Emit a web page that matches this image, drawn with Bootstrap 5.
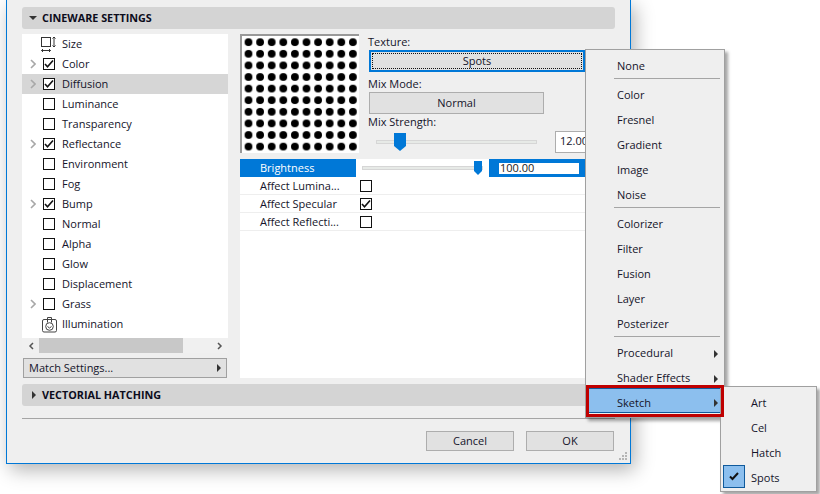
<!DOCTYPE html>
<html lang="en">
<head>
<meta charset="UTF-8">
<title>Cineware Settings</title>
<link href="https://cdn.jsdelivr.net/npm/bootstrap@5.3.3/dist/css/bootstrap.min.css" rel="stylesheet">
<style>
body { background: #fff; margin: 0; width: 820px; height: 494px; overflow: hidden; font-family: "Open Sans", "Noto Sans", sans-serif; font-size: 11px; color: #14142a; position: relative; }
.dlg { width: 625px; height: 464px; margin-left: 6px; background: #efefef; border: 1px solid #0078d7; border-top: 0; padding: 7px 15px 0; box-shadow: 4px 6px 18px rgba(0,0,0,.3); position: relative; }
.sec-head { height: 22px; background: #d4d4d4; border-radius: 3px; font-weight: 700; font-size: 10.8px; padding-left: 6px; gap: 5px; color: #0c0c1c; }
.tri-down { width: 0; height: 0; border: 4px solid transparent; border-top: 4px solid #333; border-bottom: 0; margin-left: 1px; }
.tri-right { width: 0; height: 0; border: 4px solid transparent; border-left: 4px solid #333; border-right: 0; flex: none; }
.body-row { height: 344px; margin-top: 5px; gap: 12px; }
.left-col { width: 206px; }
.tree { height: 304px; background: #fff; }
.tree-row { height: 20px; }
.tree-row.sel { background: #d6d6d6; }
.chev { width: 21px; flex: none; padding-left: 8px; display: flex; }
.cb { width: 12px; height: 12px; border: 1px solid #111; background: #fff; flex: none; display: block; }
.cb svg { display: block; }
.ic { width: 17px; height: 17px; margin: 0 -3px 0 -2px; flex: none; }
.tree-lbl { margin-left: 7px; }
.hscroll { height: 15px; background: #f0f0f0; }
.hthumb { width: 144px; height: 100%; background: #c8c8c8; }
.hbtn { width: 17px; display: flex; justify-content: center; align-items: center; }
.match-btn { height: 20px; margin: 5px 1px 0; background: #e1e1e1; border: 1px solid #a0a0a0; padding: 0 5px 0 5px; }
.right-col { width: 375px; background: #fff; }
.top-part { height: 125px; background: #efefef; }
.preview { width: 119px; height: 119px; border-top: 2px solid #999; border-left: 2px solid #999; background: #fff; display: block; flex: none; }
.ctl { margin-left: 9px; width: 247px; position: relative; }
.lbl { height: 16px; line-height: 16px; }
.lbl-gap { margin-top: 4px; }
.tex-btn { width: 216px; height: 22px; background: #e1e1e1; border: 2px solid #0078d7; outline: 1px dotted #111; outline-offset: -4px; margin-left: 1px; }
.mix-btn { width: 175px; height: 22px; background: #e1e1e1; border: 1px solid #adadad; margin-left: 1px; }
.slide-row { margin-top: 1px; }
.track { height: 4px; background: #e7eae7; border: 1px solid #d6d6d6; position: relative; }
.thumb { position: absolute; width: 12px; height: 18px; top: -8px; background: #0078d7; clip-path: polygon(0 0, 100% 0, 100% 72%, 50% 100%, 0 72%); }
.s1 { width: 161px; margin: 0 0 0 8px; flex: none; }
.s1 .thumb { left: 17px; }
.num-box { width: 34px; height: 22px; background: #fff; border: 1px solid #adadad; margin-left: 18px; padding-left: 4px; line-height: 18px; overflow: hidden; white-space: nowrap; }
.prop-row { height: 18px; border-bottom: 1px solid #eee; }
.prop-row.act { height: 18px; border: 0; }
.prop-name { width: 116px; padding: 1px 0 0 20px; flex: none; white-space: nowrap; }
.act .prop-name { background: #0078d7; color: #fff; height: 100%; display: flex; align-items: center; padding-top: 0; }
.s2 { width: 121px; margin: 0 6px 0 6px; flex: none; }
.s2 .thumb { left: 111px; width: 8px; height: 14px; top: -6px; }
.val-cell { width: 132px; height: 100%; background: #0078d7; padding-left: 10px; flex: none; }
.val-in { width: 80px; height: 11px; background: #fff; line-height: 10px; color: #222; padding-left: 1px; }
.prop-cb { margin-left: 4px; }
.sep { border-top: 1px solid #a5a5a5; margin-top: 12px; height: 0; }
.foot { margin-top: 12px; margin-right: 1px; gap: 12px; }
.foot-btn { width: 88px; height: 20px; background: #e1e1e1; border: 1px solid #adadad; }
.grip { position: absolute; right: 2px; bottom: 2px; }
.ctx { position: absolute; display: block; margin: 0; padding: 3px; min-width: 0; background: #efefef; border: 1px solid #a0a0a0; border-radius: 0; box-shadow: 3px 3px 3px rgba(0,0,0,.35); font-size: 11px; color: #14142a; }
.ctx-main { left: 585px; top: 49px; width: 140px; height: 369px; }
.ctx-sub { left: 720px; top: 386px; width: 97px; height: 106px; }
.ctx .dropdown-item { height: 25px; padding: 2px 0 0 28px; display: flex; align-items: center; justify-content: space-between; color: inherit; background: transparent; position: relative; }
.ctx-sub .dropdown-item { padding-left: 27px; }
.ctx .dropdown-divider { margin: 0 1px 0 25px; border-top: 1px solid #a5a5a5; opacity: 1; height: 4px; }
.tri-sub { margin-right: 3px; }
.ctx .dropdown-item.hi { margin-top: -2px; padding-top: 5px; background: #8cbfee; border-top: 1px solid #0f5a9c; border-bottom: 1px solid #0f5a9c; }
.red-box { position: absolute; z-index: 1001; left: 586px; top: 385px; width: 138px; height: 32px; border: 3px solid #bf0000; pointer-events: none; }
.chk-box { position: absolute; left: -1px; top: 0; width: 22px; height: 23px; background: #8cbfee; border: 1px solid #0f5a9c; display: flex; align-items: center; justify-content: center; }
</style>
</head>
<body>
<div class="dlg">
  <div class="sec-head d-flex align-items-center"><span class="tri-down"></span><span>CINEWARE SETTINGS</span></div>
  <div class="body-row d-flex">
    <div class="left-col d-flex flex-column">
      <div class="tree">
        <div class="tree-row d-flex align-items-center"><span class="chev"></span><svg class="ic" viewBox="0 0 17 17" fill="none" stroke="#333"><rect x="0.500" y="1.500" width="9" height="9"/><path d="M13 1v10M11.500 2.500L13 1l1.500 1.500M11.500 9.500L13 11l1.500-1.500M0.500 14.500h9M2 13L0.500 14.500 2 16M8 13l1.500 1.500L8 16"/></svg><span class="tree-lbl">Size</span></div>
        <div class="tree-row d-flex align-items-center"><span class="chev"><svg width="6" height="10" viewBox="0 0 6 10" fill="none" stroke="#a8a8a8" stroke-width="1.600"><path d="M1 1l4 4-4 4"/></svg></span><span class="cb"><svg width="10" height="10" viewBox="0 0 10 10" fill="none" stroke="#111" stroke-width="1.600"><path d="M1 5l2.500 2.800L9 1.500"/></svg></span><span class="tree-lbl">Color</span></div>
        <div class="tree-row sel d-flex align-items-center"><span class="chev"><svg width="6" height="10" viewBox="0 0 6 10" fill="none" stroke="#a8a8a8" stroke-width="1.600"><path d="M1 1l4 4-4 4"/></svg></span><span class="cb"><svg width="10" height="10" viewBox="0 0 10 10" fill="none" stroke="#111" stroke-width="1.600"><path d="M1 5l2.500 2.800L9 1.500"/></svg></span><span class="tree-lbl">Diffusion</span></div>
        <div class="tree-row d-flex align-items-center"><span class="chev"></span><span class="cb"></span><span class="tree-lbl">Luminance</span></div>
        <div class="tree-row d-flex align-items-center"><span class="chev"></span><span class="cb"></span><span class="tree-lbl">Transparency</span></div>
        <div class="tree-row d-flex align-items-center"><span class="chev"><svg width="6" height="10" viewBox="0 0 6 10" fill="none" stroke="#a8a8a8" stroke-width="1.600"><path d="M1 1l4 4-4 4"/></svg></span><span class="cb"><svg width="10" height="10" viewBox="0 0 10 10" fill="none" stroke="#111" stroke-width="1.600"><path d="M1 5l2.500 2.800L9 1.500"/></svg></span><span class="tree-lbl">Reflectance</span></div>
        <div class="tree-row d-flex align-items-center"><span class="chev"></span><span class="cb"></span><span class="tree-lbl">Environment</span></div>
        <div class="tree-row d-flex align-items-center"><span class="chev"></span><span class="cb"></span><span class="tree-lbl">Fog</span></div>
        <div class="tree-row d-flex align-items-center"><span class="chev"><svg width="6" height="10" viewBox="0 0 6 10" fill="none" stroke="#a8a8a8" stroke-width="1.600"><path d="M1 1l4 4-4 4"/></svg></span><span class="cb"><svg width="10" height="10" viewBox="0 0 10 10" fill="none" stroke="#111" stroke-width="1.600"><path d="M1 5l2.500 2.800L9 1.500"/></svg></span><span class="tree-lbl">Bump</span></div>
        <div class="tree-row d-flex align-items-center"><span class="chev"></span><span class="cb"></span><span class="tree-lbl">Normal</span></div>
        <div class="tree-row d-flex align-items-center"><span class="chev"></span><span class="cb"></span><span class="tree-lbl">Alpha</span></div>
        <div class="tree-row d-flex align-items-center"><span class="chev"></span><span class="cb"></span><span class="tree-lbl">Glow</span></div>
        <div class="tree-row d-flex align-items-center"><span class="chev"></span><span class="cb"></span><span class="tree-lbl">Displacement</span></div>
        <div class="tree-row d-flex align-items-center"><span class="chev"><svg width="6" height="10" viewBox="0 0 6 10" fill="none" stroke="#a8a8a8" stroke-width="1.600"><path d="M1 1l4 4-4 4"/></svg></span><span class="cb"></span><span class="tree-lbl">Grass</span></div>
        <div class="tree-row d-flex align-items-center"><span class="chev"></span><svg class="ic" viewBox="0 0 17 17" fill="none" stroke="#444"><rect x="1.500" y="3.500" width="14" height="12.500" rx="1.500"/><circle cx="8.500" cy="10.500" r="3.800"/><path d="M6.500 6.500V1.500h4v5M6.500 10.500l2 1.500 2-1.500"/></svg><span class="tree-lbl">Illumination</span></div>
      </div>
      <div class="hscroll d-flex align-items-stretch">
        <span class="hbtn"><svg width="6" height="8" viewBox="0 0 6 8" fill="none" stroke="#555" stroke-width="1.500"><path d="M5 1L2 4l3 3"/></svg></span>
        <span class="hthumb"></span>
        <span class="hbtn ms-auto"><svg width="6" height="8" viewBox="0 0 6 8" fill="none" stroke="#555" stroke-width="1.500"><path d="M1 1l3 3-3 3"/></svg></span>
      </div>
      <div class="match-btn d-flex align-items-center justify-content-between"><span>Match Settings...</span><span class="tri-right"></span></div>
    </div>
    <div class="right-col">
      <div class="top-part d-flex">
        <svg class="preview" viewBox="0 0 117 117">
          <defs><pattern id="dots" x="0.700" y="0.400" width="11.600" height="11.600" patternUnits="userSpaceOnUse"><circle cx="5.800" cy="5.800" r="3.900" fill="#000"/></pattern></defs>
          <rect width="117" height="117" fill="url(#dots)"/>
        </svg>
        <div class="ctl">
          <div class="lbl">Texture:</div>
          <div class="tex-btn d-flex align-items-center justify-content-center">Spots</div>
          <div class="lbl lbl-gap">Mix Mode:</div>
          <div class="mix-btn d-flex align-items-center justify-content-center">Normal</div>
          <div class="lbl">Mix Strength:</div>
          <div class="slide-row d-flex align-items-center">
            <div class="track s1"><span class="thumb"></span></div>
            <div class="num-box">12.00</div>
          </div>
        </div>
      </div>
      <div class="prop-row act d-flex align-items-center">
        <div class="prop-name">Brightness</div>
        <div class="track s2"><span class="thumb"></span></div>
        <div class="val-cell d-flex align-items-center"><div class="val-in">100.00</div></div>
      </div>
      <div class="prop-row d-flex align-items-center"><div class="prop-name">Affect Lumina...</div><span class="cb prop-cb"></span></div>
      <div class="prop-row d-flex align-items-center"><div class="prop-name">Affect Specular</div><span class="cb prop-cb"><svg width="10" height="10" viewBox="0 0 10 10" fill="none" stroke="#111" stroke-width="1.600"><path d="M1 5l2.500 2.800L9 1.500"/></svg></span></div>
      <div class="prop-row d-flex align-items-center"><div class="prop-name">Affect Reflecti...</div><span class="cb prop-cb"></span></div>
    </div>
  </div>
  <div class="sec-head d-flex align-items-center" style="margin-top:6px"><span class="tri-right ms-1" style="margin-right:1px"></span><span>VECTORIAL HATCHING</span></div>
  <div class="sep"></div>
  <div class="foot d-flex justify-content-end">
    <div class="foot-btn d-flex align-items-center justify-content-center">Cancel</div>
    <div class="foot-btn d-flex align-items-center justify-content-center">OK</div>
  </div>
  <svg class="grip" width="9" height="9" viewBox="0 0 9 9" fill="#b5b5b5"><rect x="6" y="0" width="2" height="2"/><rect x="3" y="3" width="2" height="2"/><rect x="6" y="3" width="2" height="2"/><rect x="0" y="6" width="2" height="2"/><rect x="3" y="6" width="2" height="2"/><rect x="6" y="6" width="2" height="2"/></svg>
</div>

<div class="dropdown-menu ctx ctx-main">
  <div class="dropdown-item">None</div>
  <div class="dropdown-divider"></div>
  <div class="dropdown-item">Color</div>
  <div class="dropdown-item">Fresnel</div>
  <div class="dropdown-item">Gradient</div>
  <div class="dropdown-item">Image</div>
  <div class="dropdown-item">Noise</div>
  <div class="dropdown-divider"></div>
  <div class="dropdown-item">Colorizer</div>
  <div class="dropdown-item">Filter</div>
  <div class="dropdown-item">Fusion</div>
  <div class="dropdown-item">Layer</div>
  <div class="dropdown-item">Posterizer</div>
  <div class="dropdown-divider"></div>
  <div class="dropdown-item">Procedural<span class="tri-right tri-sub"></span></div>
  <div class="dropdown-item">Shader Effects<span class="tri-right tri-sub"></span></div>
  <div class="dropdown-item hi">Sketch<span class="tri-right tri-sub"></span></div>
</div>
<div class="dropdown-menu ctx ctx-sub">
  <div class="dropdown-item">Art</div>
  <div class="dropdown-item">Cel</div>
  <div class="dropdown-item">Hatch</div>
  <div class="dropdown-item"><span class="chk-box"><svg width="10" height="9" viewBox="0 0 10 9" fill="none" stroke="#111" stroke-width="2"><path d="M1 4.500l2.500 2.500L9 1"/></svg></span>Spots</div>
</div>
<div class="red-box"></div>
</body>
</html>
